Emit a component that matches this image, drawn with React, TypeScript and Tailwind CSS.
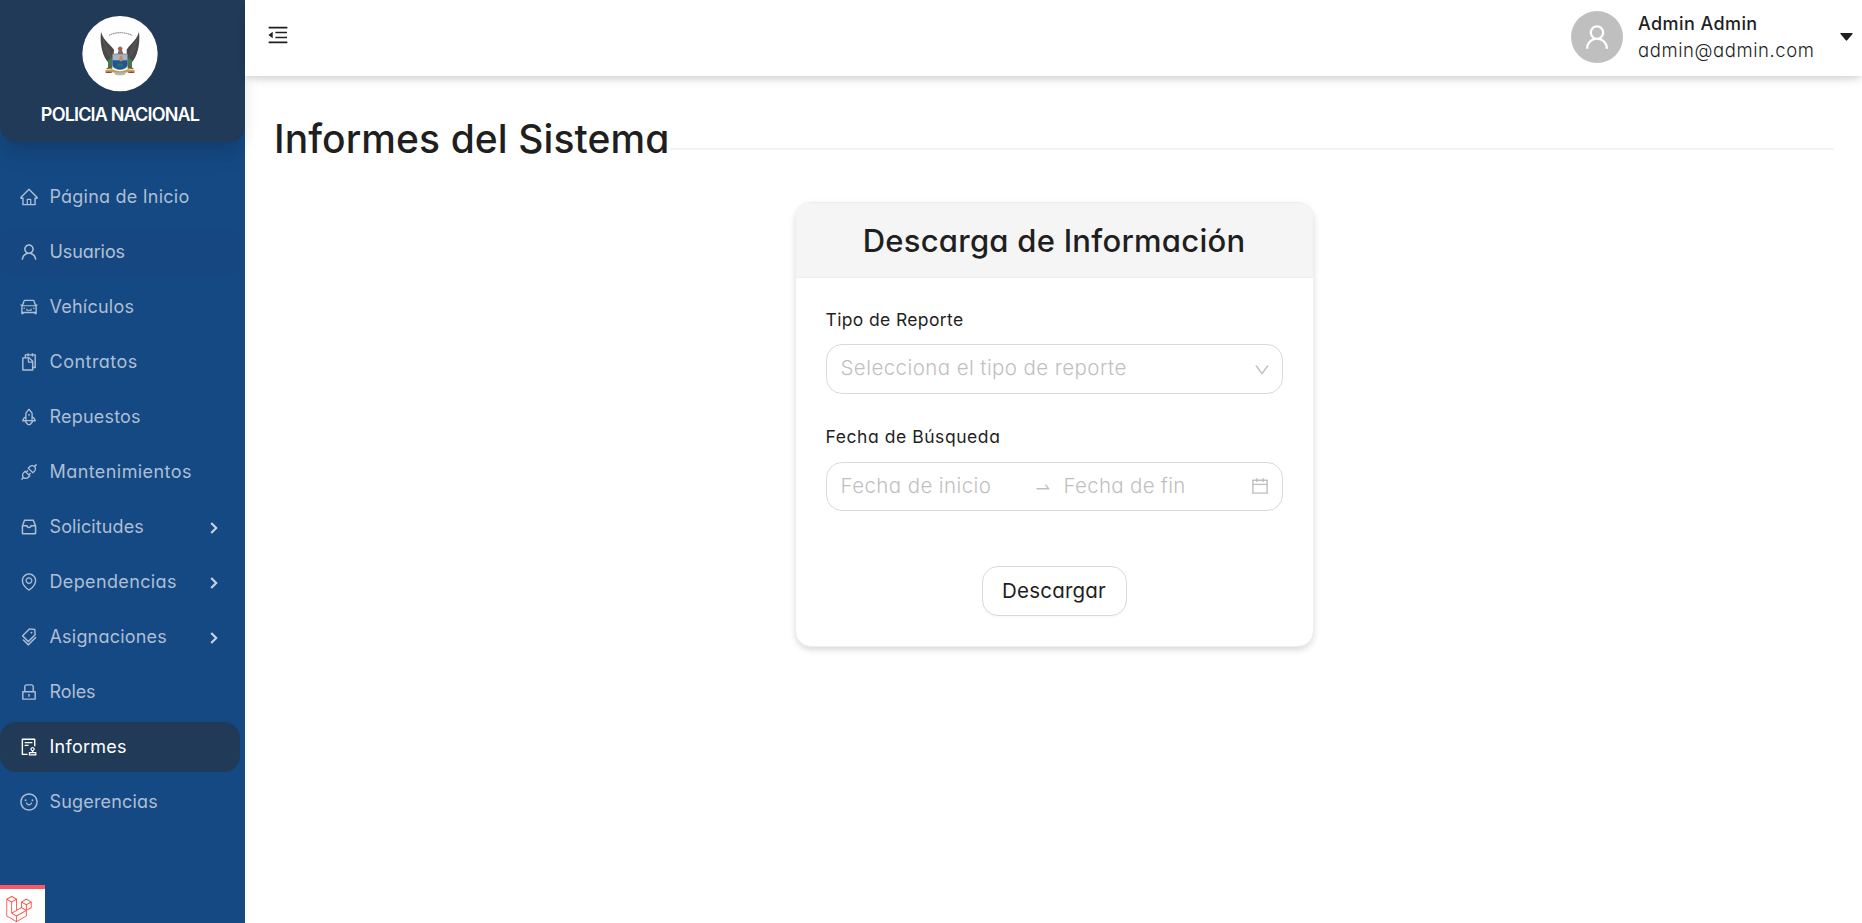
import type { ReactNode } from 'react';
import type { IconType } from 'react-icons';
import {
  AiOutlineApi,
  AiOutlineAudit,
  AiOutlineCalendar,
  AiOutlineCar,
  AiOutlineDown,
  AiOutlineEnvironment,
  AiOutlineHome,
  AiOutlineInbox,
  AiOutlineLock,
  AiOutlineMenuFold,
  AiOutlineRocket,
  AiOutlineSmile,
  AiOutlineSnippets,
  AiOutlineSwapRight,
  AiOutlineTags,
  AiOutlineUser,
} from 'react-icons/ai';
import { SiLaravel } from 'react-icons/si';

type Item = {
  label: string;
  icon: IconType;
  tracking: string;
  sub?: boolean;
  state?: 'active' | 'hover';
};

const items: Item[] = [
  { label: 'Página de Inicio', icon: AiOutlineHome, tracking: 'tracking-[0.22px]' },
  { label: 'Usuarios', icon: AiOutlineUser, tracking: 'tracking-[-0.1px]', state: 'hover' },
  { label: 'Vehículos', icon: AiOutlineCar, tracking: 'tracking-[0.24px]' },
  { label: 'Contratos', icon: AiOutlineSnippets, tracking: 'tracking-[0.48px]' },
  { label: 'Repuestos', icon: AiOutlineRocket, tracking: 'tracking-[0.2px]' },
  { label: 'Mantenimientos', icon: AiOutlineApi, tracking: 'tracking-[0.43px]' },
  { label: 'Solicitudes', icon: AiOutlineInbox, tracking: 'tracking-[0.1px]', sub: true },
  { label: 'Dependencias', icon: AiOutlineEnvironment, tracking: 'tracking-[0.36px]', sub: true },
  { label: 'Asignaciones', icon: AiOutlineTags, tracking: 'tracking-[0.2px]', sub: true },
  { label: 'Roles', icon: AiOutlineLock, tracking: 'tracking-[-0.1px]' },
  { label: 'Informes', icon: AiOutlineAudit, tracking: 'tracking-[0.26px]', state: 'active' },
  { label: 'Sugerencias', icon: AiOutlineSmile, tracking: 'tracking-[0.18px]' },
];

const stateClasses = {
  active: 'bg-[#203a57] text-white',
  hover: 'bg-[#164781] text-[#b1c1d4]',
  idle: 'text-[#adbfd4]',
};

function Crest() {
  return (
    <svg viewBox="246 48 228 228" className="size-[76px]">
      <circle cx="360" cy="161" r="113" fill="#fff" />
      <path d="M327 106q33-16 70 0" fill="none" stroke="#777" strokeWidth="3" strokeDasharray="5 1.5" />
      <path d="M303 95c8 28 27 36 39 54l-4 46-14-8c-14-16-26-52-21-92z" fill="#4b484a" />
      <path d="M417 95c-8 28-27 36-37 54l2 46 14-8c14-16 26-52 21-92z" fill="#4b484a" />
      <path d="M309 122l22 38M312 142l22 32M411 122l-22 38M408 142l-22 32" stroke="#68666a" strokeWidth="2" />
      <path d="M324 180l13-7v33h-13zM396 180l-13-7v33h13z" fill="#3d7c4b" />
      <path d="M320 207l16-9M400 207l-16-9" stroke="#a33b3b" strokeWidth="4" />
      <path d="M353 145l7-6 8 5-2 6 4 12h-18l4-10z" fill="#8c6660" />
      <path d="M354 146h6" stroke="#d8482f" strokeWidth="4" />
      <path d="M337 162h46v31c0 10-12 15-23 16-11-1-23-6-23-16z" fill="#a9b5c3" stroke="#6c7787" strokeWidth="2" />
      <path d="M338 181h44v13c0 9-12 13-22 14-10-1-22-5-22-14z" fill="#1d5796" />
      <path d="M349 194c7-5 15-5 22 0l-6 6h-10z" fill="#287468" />
      <path d="M359 170l7-4 3 13-5 6-7-5z" fill="#c68c61" />
      <path d="M316 211l20-3q24 11 48 0l20 3v7l-22-1q-22 8-44 0l-22 1z" fill="#bda34d" />
      <path d="M318 217h17M385 217h17" stroke="#a63a48" strokeWidth="4" />
      <path d="M342 216q18 5 36 0l-4 8q-14 4-28 0z" fill="#b9b6b8" />
    </svg>
  );
}

function MenuItem({ item }: { item: Item }) {
  const Icon = item.icon;
  return (
    <li
      className={`flex h-[50px] w-[240px] items-center gap-[10.5px] rounded-2xl pr-[21px] pl-[19px] ${stateClasses[item.state ?? 'idle']}`}
    >
      <Icon className="size-5 shrink-0" />
      <span className={`flex-1 text-[18px] leading-6 whitespace-nowrap ${item.tracking}`}>{item.label}</span>
      {item.sub && (
        <svg viewBox="0 0 9 12" className="mt-[2px] h-3 w-[9px]" fill="none" stroke="#c6d2e1" strokeWidth="2.2">
          <path d="M1.2 1l5 5-5 5" />
        </svg>
      )}
    </li>
  );
}

function Sidebar() {
  return (
    <aside className="flex w-[245px] shrink-0 flex-col bg-[#154983]">
      <div className="flex h-[142px] shrink-0 flex-col items-center rounded-b-2xl bg-[#203a57] pt-4 pr-[5px] shadow-[0_10px_15px_-3px_rgba(0,0,0,0.1),0_20px_25px_-5px_rgba(0,0,0,0.06)]">
        <Crest />
        <p className="mt-[11px] text-[18px] leading-6 font-semibold tracking-[-0.83px] whitespace-nowrap text-white">
          POLICIA NACIONAL
        </p>
      </div>
      <ul className="flex flex-1 flex-col gap-[5px] pt-[30px]">
        {items.map((item) => (
          <MenuItem key={item.label} item={item} />
        ))}
      </ul>
      <div className="flex h-[38px] w-[45px] shrink-0 items-start border-t-4 border-[#ff5661] bg-white pt-[7px] pl-[6px]">
        <SiLaravel className="size-[26px] text-[#ff4336]" />
      </div>
    </aside>
  );
}

function TopBar() {
  return (
    <header className="flex h-[76px] shrink-0 items-center bg-white pr-[9px] pl-[21px] shadow-[0_4px_6px_-1px_rgba(0,0,0,0.1),0_6px_12px_-4px_rgba(0,0,0,0.1)]">
      <AiOutlineMenuFold className="mb-[6px] size-6 text-[#1f1f1f]" />
      <div className="ml-auto flex items-center text-[18px] text-[#1f1f1f]">
        <span className="mr-[15px] mb-[2px] flex size-[52px] items-center justify-center rounded-full bg-[#bfbfbf] text-white">
          <AiOutlineUser className="size-[30px]" />
        </span>
        <div className="mb-[3px] flex w-[202px] flex-col leading-[27px] whitespace-nowrap">
          <span className="font-medium tracking-[0.42px]">Admin Admin</span>
          <span className="text-[18.5px] font-light tracking-[0.57px]">admin@admin.com</span>
        </div>
        <svg viewBox="0 0 13 8" className="mb-[2px] h-2 w-[13px]" fill="#1f1f1f">
          <path d="M.9 0h11.2q.9.2.4 1L7.2 7.3q-.7.8-1.4 0L.5 1Q0 .2.9 0z" />
        </svg>
      </div>
    </header>
  );
}

function Field({ label, className, children }: { label: string; className: string; children: ReactNode }) {
  return (
    <div className="flex flex-col">
      <label className={`text-[17.5px] leading-6 font-normal text-[#1f1f1f] ${className}`}>{label}</label>
      {children}
    </div>
  );
}

function ReportCard() {
  return (
    <section className="flex h-[445px] w-[519px] flex-col overflow-hidden rounded-2xl border border-[#eeeeee] bg-white shadow-[0_4px_6px_-1px_rgba(0,0,0,0.1),0_2px_10px_-1px_rgba(0,0,0,0.08)]">
      <h2 className="flex h-[75px] shrink-0 items-center justify-center border-b border-[#eeeeee] bg-[#f5f5f5] pt-[3px] text-[31px] font-medium tracking-[0.25px] text-[#1f1f1f]">
        Descarga de Información
      </h2>
      <div className="flex flex-col px-[30px] pt-[30px] font-light">
        <Field label="Tipo de Reporte" className="mb-3 tracking-[0.36px]">
          <div className="flex h-[50px] items-center justify-between rounded-2xl border border-[#d9d9d9] pr-[11px] pb-px pl-[14px] text-[20.5px] text-[#bfbfbf]">
            <span className="tracking-[0.42px]">Selecciona el tipo de reporte</span>
            <AiOutlineDown className="mt-[2px] size-[18px]" />
          </div>
        </Field>
        <div className="h-[31px]" />
        <Field label="Fecha de Búsqueda" className="mb-[13px] tracking-[0.56px]">
          <div className="flex h-[49px] items-center rounded-2xl border border-[#d9d9d9] pr-[12px] pl-[14px] text-[20.5px] text-[#bfbfbf]">
            <span className="w-[193px] tracking-[0.4px]">Fecha de inicio</span>
            <AiOutlineSwapRight className="mr-[12px] size-[18px]" />
            <span className="flex-1 tracking-[0.29px]">Fecha de fin</span>
            <AiOutlineCalendar className="mb-px size-5" />
          </div>
        </Field>
        <button className="mt-[55px] flex h-[50px] w-[145px] items-center justify-center self-center rounded-2xl border border-[#d9d9d9] bg-white pt-px text-[20.5px] font-normal tracking-[0.2px] text-[#1f1f1f] shadow-[0_2px_0_rgba(0,0,0,0.02)]">
          Descargar
        </button>
      </div>
    </section>
  );
}

export default function App() {
  return (
    <div className="flex h-[923px] w-full overflow-hidden bg-white font-['Inter',sans-serif] [font-feature-settings:'cv11']">
      <Sidebar />
      <div className="flex min-w-0 flex-1 flex-col">
        <TopBar />
        <main className="flex flex-1 flex-col pr-7 pl-[29px]">
          <div className="flex h-[126px] items-start pt-[39px]">
            <h1 className="w-[396px] shrink-0 text-[39px] leading-[48px] font-medium tracking-[0.08px] whitespace-nowrap text-[#1f1f1f]">
              Informes del Sistema
            </h1>
            <span className="mt-[33px] h-[2px] flex-1 bg-[#f3f3f3]" />
          </div>
          <div className="flex justify-center">
            <ReportCard />
          </div>
        </main>
      </div>
    </div>
  );
}
